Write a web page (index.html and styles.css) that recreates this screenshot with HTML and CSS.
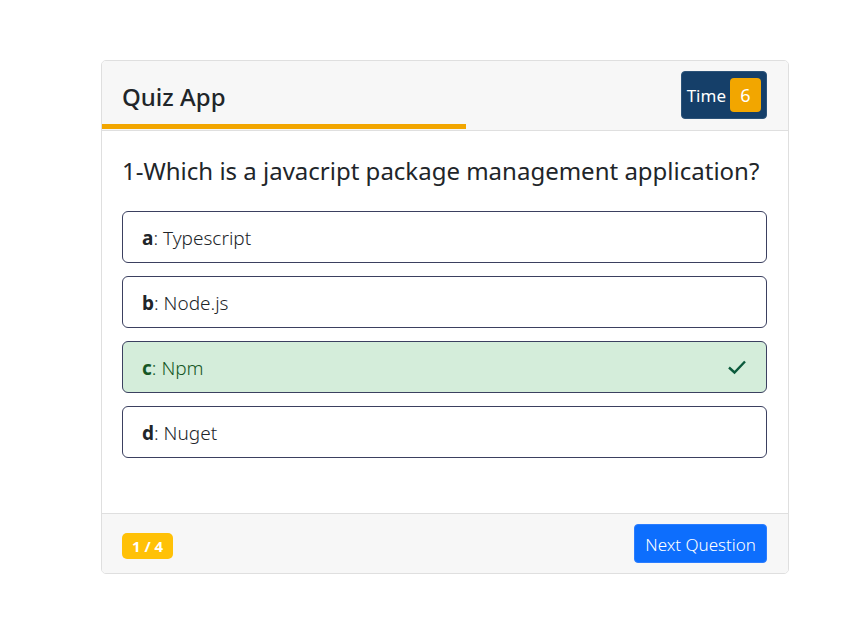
FILE: index.html
```html
<!DOCTYPE html>
<html lang="en">
<head>
<meta charset="utf-8">
<meta name="viewport" content="width=device-width, initial-scale=1">
<title>Quiz App</title>
<link rel="stylesheet" href="styles.css">
</head>
<body>
<main class="quiz">
  <header class="quiz-header">
    <h1 class="title">Quiz App</h1>
    <div class="timer"><span>Time</span><span class="seconds">6</span></div>
    <div class="time-line"></div>
  </header>
  <section class="quiz-body">
    <h2 class="question">1-Which is a javacript package management application?</h2>
    <div class="options">
      <button type="button" class="option"><span><b>a</b>: Typescript</span></button>
      <button type="button" class="option"><span><b>b</b>: Node.js</span></button>
      <button type="button" class="option correct"><span><b>c</b>: Npm</span>
        <svg class="check" viewBox="0 0 20 20" aria-hidden="true"><path d="M2 9.500L7.500 14.500L18 3.500"/></svg>
      </button>
      <button type="button" class="option"><span><b>d</b>: Nuget</span></button>
    </div>
  </section>
  <footer class="quiz-footer">
    <span class="badge">1 / 4</span>
    <button type="button" class="next">Next Question</button>
  </footer>
</main>
</body>
</html>
```
FILE: styles.css
```css
* {
  box-sizing: border-box;
}

body {
  margin: 0;
  padding: 60px 67px 52px 101px;
  background: #fff;
  color: #212529;
  font-family: "Noto Sans", "Open Sans", sans-serif;
  font-size: 18px;
}

button {
  font: inherit;
  color: inherit;
  cursor: pointer;
}

.quiz {
  border: 1px solid #dfdfdf;
  border-radius: 5px;
  background: #fff;
}

.quiz-header {
  position: relative;
  display: flex;
  align-items: center;
  justify-content: space-between;
  padding: 10px 21px 11px 20px;
  border-bottom: 1px solid #dfdfdf;
  border-radius: 4px 4px 0 0;
  background: #f7f7f7;
}

.title {
  margin: 4px 0 0;
  font-size: 24px;
  line-height: 32px;
  font-weight: 500;
}

.timer {
  display: flex;
  align-items: center;
  gap: 4px;
  padding: 6px 5px;
  border: 1px solid #2c5379;
  border-radius: 4px;
  background: #153f69;
  color: #fff;
  font-size: 17px;
}

.seconds {
  width: 31px;
  border-radius: 4px;
  background: #f2a600;
  font-size: 18px;
  line-height: 34px;
  text-align: center;
}

.time-line {
  position: absolute;
  left: 0;
  bottom: 1px;
  width: 53%;
  height: 5px;
  background: #f2a600;
}

.quiz-body {
  padding: 24px 21px 55px 20px;
}

.question {
  margin: 0 0 24px;
  font-size: 24px;
  line-height: 32px;
  font-weight: 400;
}

.options {
  display: grid;
  gap: 13px;
}

.option {
  display: flex;
  align-items: center;
  justify-content: space-between;
  width: 100%;
  height: 52px;
  padding: 2px 19px 0;
  border: 1px solid #3b4060;
  border-radius: 6px;
  background: #fff;
  font-size: 19px;
  font-weight: 300;
  text-align: left;
}

.option b {
  font-weight: 700;
}

.option.correct {
  background: #d4edda;
  color: #155724;
}

.check {
  width: 20px;
  height: 20px;
  fill: none;
  stroke: #0b5a3c;
  stroke-width: 2.4;
}

.quiz-footer {
  display: flex;
  align-items: center;
  justify-content: space-between;
  padding: 10px 21px 10px 20px;
  border-top: 1px solid #dfdfdf;
  border-radius: 0 0 4px 4px;
  background: #f7f7f7;
}

.badge {
  margin-top: 4px;
  padding: 0 10px;
  border-radius: 5px;
  background: #ffc107;
  color: #fff;
  font-size: 15px;
  line-height: 26px;
  font-weight: 700;
}

.next {
  height: 39px;
  padding: 2px 10px 0;
  border: 1px solid #2b7dff;
  border-radius: 4px;
  background: #0d6efd;
  color: #fff;
  font-size: 17px;
  font-weight: 300;
}
```
